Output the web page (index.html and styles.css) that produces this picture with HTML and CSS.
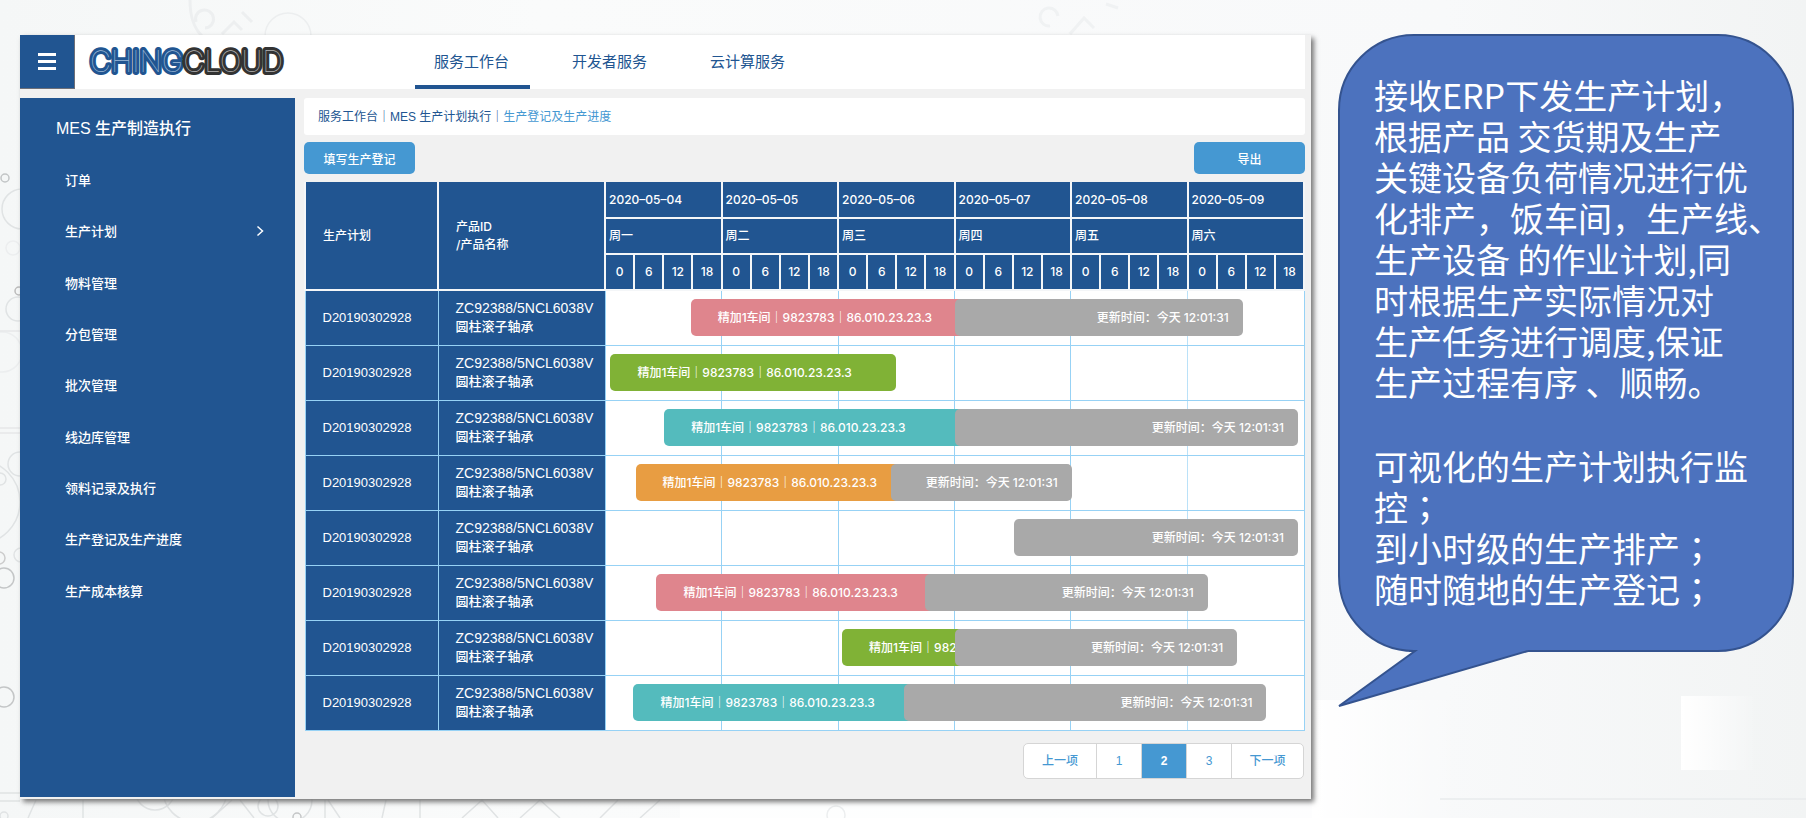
FILE: index.html
```html
<!DOCTYPE html>
<html lang="zh-CN">
<head>
<meta charset="utf-8">
<title>生产登记及生产进度</title>
<link rel="stylesheet" href="styles.css">
</head>
<body>
<svg class="backdrop" width="100%" height="100%" aria-hidden="true">
  <defs>
    <linearGradient id="fade" x1="0" x2="1" y1="0" y2="0">
      <stop offset="0" stop-color="#fff"/>
      <stop offset="1" stop-color="#fff" stop-opacity="0"/>
    </linearGradient>
  </defs>
  <rect x="680" y="798" width="640" height="20" fill="#fff" fill-opacity=".7"/>
  <rect x="1312" y="700" width="150" height="118" fill="url(#fade)"/>
  <rect x="1681" y="696" width="76" height="74" fill="url(#fade)"/>
  <g fill="none" stroke="#e0e3e4" stroke-width="1.5">
    <circle cx="5" cy="178" r="4" stroke="#c2c5c6"/>
    <circle cx="22" cy="209" r="20"/>
    <circle cx="13" cy="248" r="7" stroke="#eceeef"/>
    <circle cx="19" cy="291" r="4" stroke="#bbb"/>
    <circle cx="18" cy="309" r="12"/>
    <circle cx="2" cy="352" r="20" stroke="#eceeef"/>
    <path d="M0 331H20M0 428H20M0 433H20" stroke="#e6e8e9"/>
    <circle cx="-22" cy="502" r="42"/>
    <circle cx="20" cy="464" r="12"/>
    <circle cx="0" cy="479" r="6"/>
    <circle cx="-1" cy="558" r="6" stroke="#ccc"/>
    <circle cx="21" cy="555" r="7"/>
    <circle cx="4" cy="578" r="10" stroke="#c4c6c7"/>
    <circle cx="4" cy="697" r="10" stroke="#c4c6c7"/>
    <circle cx="155" cy="790" r="20"/>
    <circle cx="195" cy="790" r="32"/>
    <circle cx="268" cy="806" r="10"/>
    <circle cx="297" cy="817" r="4" stroke="#c4c6c7"/>
    <circle cx="290" cy="800" r="22"/>
    <circle cx="4" cy="816" r="4"/>
    <path d="M0 793H20M0 801H20M36 800l-8 18M83 800v18M212 818l20-18M240 800l14 18M325 800v18M340 818l-12-18M382 818l4-18M420 800v18M462 818l20-18 16 18M520 818l20-18M540 800l20 18M600 818l18-18M640 818l20-18"/>
    <circle cx="836" cy="815" r="9" stroke="#eceeef"/>
    <circle cx="288" cy="36" r="23" stroke="#eceeef"/>
    <path d="M190 0c0 18 4 28 12 36M196 22a9 9 0 1 1 9 6M222 34l12-12 8 8M242 12l10 10" stroke="#edeff0" stroke-width="3"/>
    <path d="M1050 26a9 9 0 1 1 8-10M1070 34l14-16 10 10M1106 4l12 4" stroke="#f0f2f3" stroke-width="3"/>
    <path d="M1440 799H1806" stroke="#e9ebec"/>
  </g>
</svg>
<div class="page">
  <div class="app">
    <header class="topbar">
      <button class="menu" type="button" aria-label="菜单">
        <svg width="18" height="17" viewBox="0 0 18 17"><path d="M0 1.5h18M0 8.5h18M0 15.5h18" stroke="#fff" stroke-width="3"/></svg>
      </button>
      <a class="logo" href="#">
        <svg width="210" height="34" viewBox="0 0 210 34"><text x="3" y="27"><tspan class="logo-a">CHING</tspan><tspan class="logo-b">CLOUD</tspan></text></svg>
      </a>
      <nav class="tabs">
        <a class="tab tab-on" href="#">服务工作台</a>
        <a class="tab" href="#">开发者服务</a>
        <a class="tab" href="#">云计算服务</a>
      </nav>
    </header>
    <div class="body">
      <aside class="side">
        <h2 class="side-title">MES 生产制造执行</h2>
        <ul class="side-list">
          <li><a href="#">订单</a></li>
          <li><a href="#">生产计划<svg width="8" height="12" viewBox="0 0 8 12"><path d="M1.500 1.500l5 4.500-5 4.500" fill="none" stroke="#fff" stroke-width="1.500"/></svg></a></li>
          <li><a href="#">物料管理</a></li>
          <li><a href="#">分包管理</a></li>
          <li><a href="#">批次管理</a></li>
          <li><a href="#">线边库管理</a></li>
          <li><a href="#">领料记录及执行</a></li>
          <li><a href="#">生产登记及生产进度</a></li>
          <li><a href="#">生产成本核算</a></li>
        </ul>
      </aside>
      <main class="main">
        <div class="crumbs">服务工作台｜MES 生产计划执行｜<span class="crumb-on">生产登记及生产进度</span></div>
        <div class="actions">
          <button class="btn" type="button">填写生产登记</button>
          <button class="btn btn-export" type="button">导出</button>
        </div>
        <table class="plan">
          <colgroup><col class="c-plan"><col class="c-prod"><col span="24"></colgroup>
          <thead>
            <tr><th rowspan="3" class="h-main">生产计划</th><th rowspan="3" class="h-main">产品ID<br>/产品名称</th><th colspan="4">2020–05–04</th><th colspan="4">2020–05–05</th><th colspan="4">2020–05–06</th><th colspan="4">2020–05–07</th><th colspan="4">2020–05–08</th><th colspan="4">2020–05–09</th></tr>
            <tr><th colspan="4">周一</th><th colspan="4">周二</th><th colspan="4">周三</th><th colspan="4">周四</th><th colspan="4">周五</th><th colspan="4">周六</th></tr>
            <tr class="hours"><th>0</th><th>6</th><th>12</th><th>18</th><th>0</th><th>6</th><th>12</th><th>18</th><th>0</th><th>6</th><th>12</th><th>18</th><th>0</th><th>6</th><th>12</th><th>18</th><th>0</th><th>6</th><th>12</th><th>18</th><th>0</th><th>6</th><th>12</th><th>18</th></tr>
          </thead>
          <tbody>
            <tr><td class="id">D20190302928</td><td class="prod"><span class="code">ZC92388/5NCL6038V</span><br>圆柱滚子轴承</td><td colspan="24" class="lane"><div class="track"><div class="bar pink" style="left:12.2%;width:39.5%">精加1车间｜9823783｜86.010.23.23.3</div><div class="bar late" style="left:50%;width:41.3%">更新时间：今天 12:01:31</div></div></td></tr>
            <tr><td class="id">D20190302928</td><td class="prod"><span class="code">ZC92388/5NCL6038V</span><br>圆柱滚子轴承</td><td colspan="24" class="lane"><div class="track"><div class="bar green" style="left:.7%;width:40.9%">精加1车间｜9823783｜86.010.23.23.3</div></div></td></tr>
            <tr><td class="id">D20190302928</td><td class="prod"><span class="code">ZC92388/5NCL6038V</span><br>圆柱滚子轴承</td><td colspan="24" class="lane"><div class="track"><div class="bar teal" style="left:8.4%;width:43.2%">精加1车间｜9823783｜86.010.23.23.3</div><div class="bar late" style="left:50%;width:49.2%">更新时间：今天 12:01:31</div></div></td></tr>
            <tr><td class="id">D20190302928</td><td class="prod"><span class="code">ZC92388/5NCL6038V</span><br>圆柱滚子轴承</td><td colspan="24" class="lane"><div class="track"><div class="bar orange" style="left:4.3%;width:38%">精加1车间｜9823783｜86.010.23.23.3</div><div class="bar late" style="left:40.9%;width:25.9%">更新时间：今天 12:01:31</div></div></td></tr>
            <tr><td class="id">D20190302928</td><td class="prod"><span class="code">ZC92388/5NCL6038V</span><br>圆柱滚子轴承</td><td colspan="24" class="lane"><div class="track"><div class="bar late" style="left:58.5%;width:40.7%">更新时间：今天 12:01:31</div></div></td></tr>
            <tr><td class="id">D20190302928</td><td class="prod"><span class="code">ZC92388/5NCL6038V</span><br>圆柱滚子轴承</td><td colspan="24" class="lane"><div class="track"><div class="bar pink" style="left:7.3%;width:40%">精加1车间｜9823783｜86.010.23.23.3</div><div class="bar late" style="left:45.8%;width:40.5%">更新时间：今天 12:01:31</div></div></td></tr>
            <tr><td class="id">D20190302928</td><td class="prod"><span class="code">ZC92388/5NCL6038V</span><br>圆柱滚子轴承</td><td colspan="24" class="lane"><div class="track"><div class="bar green" style="left:33.9%;width:17.7%">精加1车间｜9823783</div><div class="bar late" style="left:50%;width:40.5%">更新时间：今天 12:01:31</div></div></td></tr>
            <tr><td class="id">D20190302928</td><td class="prod"><span class="code">ZC92388/5NCL6038V</span><br>圆柱滚子轴承</td><td colspan="24" class="lane"><div class="track"><div class="bar teal" style="left:4%;width:40%">精加1车间｜9823783｜86.010.23.23.3</div><div class="bar late" style="left:42.8%;width:51.9%">更新时间：今天 12:01:31</div></div></td></tr>
          </tbody>
        </table>
        <nav class="pager">
          <a class="wide" href="#">上一项</a><a href="#">1</a><a class="on" href="#">2</a><a href="#">3</a><a class="wide" href="#">下一项</a>
        </nav>
      </main>
    </div>
  </div>
  <section class="callout">
    <div class="bubble">
      <p>接收ERP下发生产计划，<br>根据产品 交货期及生产<br>关键设备负荷情况进行优<br>化排产，饭车间，生产线、<br>生产设备 的作业计划,同<br>时根据生产实际情况对<br>生产任务进行调度,保证<br>生产过程有序 、顺畅。</p>
      <p>可视化的生产计划执行监<br>控<span class="mid" lang="zh-TW">；</span><br>到小时级的生产排产<span class="mid" lang="zh-TW">；</span><br>随时随地的生产登记<span class="mid" lang="zh-TW">；</span></p>
    </div>
    <svg class="tail" width="192" height="60" viewBox="0 0 192 60" aria-hidden="true"><path d="M77 0V3L1 58L190 3V0Z" fill="#4c72be"/><path d="M71 3H77L1 58L190 3" fill="none" stroke="#34538f" stroke-width="2"/></svg>
  </section>
</div>
</body>
</html>
```
FILE: styles.css
```css
* { box-sizing: border-box; }
body {
  margin: 0;
  min-height: 100vh;
  font-family: "Liberation Sans", "Noto Sans CJK SC", sans-serif;
  background: linear-gradient(90deg, #f5f7f7, #fafbfb 30%, #f8f9fa 80%, #f2f4f4);
}
a { color: inherit; text-decoration: none; }
.backdrop { position: absolute; inset: 0; z-index: -1; }
.page {
  display: flex;
  align-items: flex-start;
  gap: 27px;
  padding: 34px 12px 16px 20px;
}
.app {
  flex: 1;
  min-width: 0;
  margin-top: 1px;
  padding: 0 6px 2px 0;
  background: #f1f1f1;
  box-shadow: 3px 3px 5px #777;
}
.topbar { display: flex; height: 54px; background: #fff; }
.menu {
  display: grid;
  place-items: center;
  width: 55px;
  padding: 0;
  border: solid #6d6f78;
  border-width: 0 1px 1px 0;
  background: #215591;
}
.logo {
  display: flex;
  align-items: center;
  width: 320px;
  padding-left: 12px;
}
.logo text {
  font: 100 29px Inter, sans-serif;
  paint-order: stroke;
  stroke-width: 6px;
  stroke-linejoin: round;
}
.logo-a { fill: #9dbad8; stroke: #215591; }
.logo-b { fill: #b4b4b4; stroke: #333; }
.tabs { display: flex; gap: 23px; margin-left: 20px; }
.tab {
  width: 115px;
  height: 54px;
  padding: 0 19px;
  border-bottom: 4px solid transparent;
  font-size: 15px;
  line-height: 53px;
  color: #215591;
}
.tab-on { border-color: #215591; }
.body { display: flex; gap: 9px; margin-top: 9px; }
.side { width: 275px; background: #215591; color: #fff; font-size: 13px; font-weight: 500; }
.side-title { margin: 19px 36px 13px; font-size: 16px; font-weight: 500; line-height: 24px; }
.side-list {
  display: grid;
  grid-auto-rows: 1fr;
  height: 462px;
  margin: 0;
  padding: 0;
  list-style: none;
}
.side-list a {
  display: flex;
  align-items: center;
  justify-content: space-between;
  height: 100%;
  padding: 0 31px 0 45px;
}
.main { flex: 1; min-width: 0; font-size: 12px; }
.crumbs {
  padding: 1px 14px 0;
  border-radius: 3px;
  background: #fff;
  line-height: 36px;
  color: #215591;
}
.crumb-on { color: #4598d2; }
.actions { display: flex; justify-content: space-between; margin: 7px 0 8px; }
.btn {
  width: 111px;
  height: 32px;
  border: 0;
  border-radius: 5px;
  background: #4598d2;
  color: #fff;
  font: 500 12px "Liberation Sans", "Noto Sans CJK SC", sans-serif;
}
.plan {
  width: 100%;
  table-layout: fixed;
  border-collapse: collapse;
  color: #fff;
}
.c-plan { width: 133px; }
.c-prod { width: 167px; }
.plan th {
  height: 36px;
  padding: 0 3px;
  border: 2px solid #f4f6f8;
  background: #215591;
  font: 500 12px/18px Inter, "Noto Sans CJK SC", sans-serif;
  text-align: left;
}
.plan thead tr:first-child th { border-top: 0; }
.plan .h-main { padding: 0 17px; }
.plan .hours th { padding: 0; text-align: center; }
.plan td {
  height: 55px;
  padding: 0 17px;
  border: 1px solid #97d2f5;
  background: #215591;
}
.id { font-size: 13px; }
.prod { font-size: 13px; font-weight: 500; line-height: 18px; }
.code { font-size: 14px; }
.plan .lane {
  padding: 0;
  background: repeating-linear-gradient(90deg, transparent 0, transparent calc(20% - 1px), #97d2f5 calc(20% - 1px), #97d2f5 20%) 0 0 / calc(100% * 5 / 6) 100% no-repeat #fff;
}
.track { position: relative; height: 37px; }
.bar {
  position: absolute;
  height: 37px;
  padding: 0 27px;
  border-radius: 5px;
  overflow: hidden;
  white-space: nowrap;
  font: 500 12px/37px Inter, "Noto Sans CJK SC", sans-serif;
}
.late { padding: 0 14px; background: #a9a9a9; text-align: right; }
.pink { background: #df858d; }
.green { background: #80b236; }
.teal { background: #54bbbd; }
.orange { background: #e89d42; }
.pager {
  display: flex;
  width: fit-content;
  margin: 12px 1px 18px auto;
  border: 1px solid #d5d5d5;
  border-radius: 5px;
  overflow: hidden;
  background: #fff;
  color: #4598d2;
  font-weight: 500;
}
.pager a { width: 45px; line-height: 34px; text-align: center; }
.pager a + a { border-left: 1px solid #d5d5d5; }
.pager .wide { width: 72px; }
.pager .on { background: #4598d2; color: #fff; font-weight: 700; }
.callout { width: 456px; }
.bubble {
  padding: 38px 0 41px 34px;
  border: 2px solid #34538f;
  border-radius: 76px;
  background: #4c72be;
  color: #fff;
  font: 400 34px/41px "Noto Sans CJK SC", sans-serif;
  white-space: nowrap;
}
.bubble p { margin: 0; }
.bubble p + p { margin-top: 43px; }
.mid { font-family: "Noto Sans CJK TC", sans-serif; }
.tail { display: block; margin-top: -4px; position: relative; }
```
